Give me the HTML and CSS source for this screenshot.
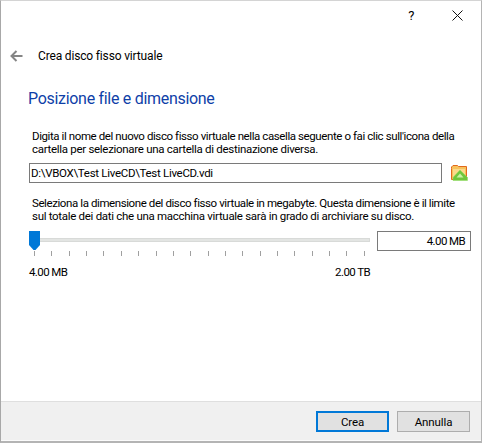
FILE: index.html
```html
<!DOCTYPE html>
<html lang="it">
<head>
    <meta charset="UTF-8">
    <meta name="viewport" content="width=device-width, initial-scale=1.0">
    <title>Crea disco fisso virtuale</title>
    <link rel="stylesheet" href="styles.css">
</head>
<body>
    <div class="window">
        <div class="title-buttons">
            <span class="help-button">?</span>
            <svg class="close-button" width="11" height="11" viewBox="0 0 11 11">
                <path d="M0.5 0.5L10.5 10.5M10.5 0.5L0.5 10.5" stroke="#111" stroke-width="1" fill="none"/>
            </svg>
        </div>

        <div class="wizard-header">
            <svg class="back-arrow" width="13" height="12" viewBox="0 0 13 12">
                <path d="M12.5 6H2M6.5 1L1.5 6L6.5 11" stroke="#858585" stroke-width="2" fill="none"/>
            </svg>
            <span class="wizard-title">Crea disco fisso virtuale</span>
        </div>

        <div class="content">
            <h1 class="page-title">Posizione file e dimensione</h1>

            <p class="description"><span class="long-line">Digita il nome del nuovo disco fisso virtuale nella casella seguente o fai clic sull'icona della</span><br>cartella per selezionare una cartella di destinazione diversa.</p>

            <div class="file-row">
                <div class="file-input">D:\VBOX\Test LiveCD\Test LiveCD.vdi</div>
                <svg class="folder-icon" width="17" height="18" viewBox="0 0 17 18">
                    <path d="M0.5 4.5V15.5H15.5V2.5H7.5L6.5 1.5H2L0.5 3Z" fill="#f7c25c" stroke="#e2691c"/>
                    <rect x="2" y="5" width="12" height="9" fill="#fbd98a"/>
                    <path d="M9 6L16.5 13.5V16.5H2V13.5Z" fill="#6fc63c" stroke="#8fdc5c" stroke-width="0.5"/>
                    <path d="M9 9.5L12.5 13.5H5.5Z" fill="#c9f2a5"/>
                </svg>
            </div>

            <p class="description size-text"><span class="long-line">Seleziona la dimensione del disco fisso virtuale in megabyte. Questa dimensione è il limite</span><br>sul totale dei dati che una macchina virtuale sarà in grado di archiviare su disco.</p>

            <div class="size-row">
                <div class="slider">
                    <div class="slider-track"></div>
                    <svg class="slider-thumb" width="11" height="19" viewBox="0 0 11 19">
                        <path d="M0 0H11V14L6.5 19H4.5L0 14Z" fill="#0078d7"/>
                    </svg>
                    <div class="slider-ticks">
                        <i></i><i></i><i></i><i></i><i></i><i></i><i></i><i></i><i></i><i></i>
                        <i></i><i></i><i></i><i></i><i></i><i></i><i></i><i></i><i></i><i></i>
                    </div>
                    <div class="slider-labels">
                        <span>4.00 MB</span>
                        <span>2.00 TB</span>
                    </div>
                </div>
                <div class="size-input">4.00 MB</div>
            </div>
        </div>

        <div class="footer">
            <button class="dialog-button default-button" type="button">Crea</button>
            <button class="dialog-button" type="button">Annulla</button>
        </div>
    </div>
</body>
</html>
```

FILE: styles.css
```css
html,
body {
    margin: 0;
    padding: 0;
    height: 443px;
    overflow: hidden;
}

body {
    font-family: Roboto, "Liberation Sans", sans-serif;
    font-size: 11.5px;
    letter-spacing: -0.3px;
    color: #000;
    background-color: #fff;
}

.window {
    height: 443px;
    box-sizing: border-box;
    display: flex;
    flex-direction: column;
    background-color: #fff;
    border-top: 1px solid #d4d4d4;
    border-left: 1px solid #a8a8a8;
    border-right: 1px solid #b4b4b4;
    border-bottom: 2px solid #b4b4b4;
}

.title-buttons {
    height: 29px;
    display: flex;
    justify-content: flex-end;
    align-items: center;
}

.help-button {
    font-size: 13px;
    margin-right: 38px;
}

.close-button {
    margin-right: 18px;
}

.wizard-header {
    height: 52px;
    display: flex;
    align-items: center;
    padding-left: 9px;
}

.wizard-title {
    margin-left: 15px;
    font-size: 12px;
    letter-spacing: -0.16px;
}

.content {
    flex: 1;
    padding: 6px 10px 0 27px;
}

.page-title {
    margin: 0;
    font-size: 16px;
    font-weight: normal;
    line-height: 22px;
    letter-spacing: -0.3px;
    color: #0f3fa8;
}

.description {
    margin: 20px 0 0 4px;
    line-height: 13px;
    white-space: nowrap;
}

.long-line {
    letter-spacing: -0.41px;
}

.file-row {
    margin-top: 7px;
    margin-left: 1px;
    display: flex;
    align-items: center;
}

.file-input {
    width: 413px;
    height: 20px;
    box-sizing: border-box;
    border: 1px solid #7a7a7a;
    padding-left: 1px;
    line-height: 18px;
}

.folder-icon {
    margin-left: 9px;
}

.size-text {
    margin-top: 14px;
}

.size-row {
    margin-top: 8px;
    margin-left: 1px;
    display: flex;
    justify-content: space-between;
    align-items: flex-start;
}

.slider {
    width: 341px;
    position: relative;
}

.slider-track {
    margin: 7px 0 0 0;
    height: 4px;
    background-color: #e3e5e3;
    border: 1px solid #d8dad8;
    box-sizing: border-box;
}

.slider-thumb {
    position: absolute;
    top: 0;
    left: 0;
}

.slider-ticks {
    margin: 9px 5px 0 5px;
    height: 5px;
    display: flex;
    justify-content: space-between;
}

.slider-ticks i {
    width: 1px;
    background-color: #a0a0a0;
}

.slider-labels {
    margin-top: 9px;
    display: flex;
    justify-content: space-between;
    letter-spacing: -0.6px;
}

.size-input {
    width: 94px;
    height: 20px;
    box-sizing: border-box;
    border: 1px solid #7a7a7a;
    padding-right: 5px;
    text-align: right;
    line-height: 18px;
    letter-spacing: -0.6px;
}

.footer {
    height: 40px;
    box-sizing: border-box;
    display: flex;
    justify-content: flex-end;
    gap: 8px;
    padding: 9px 11px 0 0;
    background-color: #f0f0f0;
    border-top: 1px solid #dfdfdf;
    border-bottom: 1px solid #fbfbfb;
}

.dialog-button {
    width: 73px;
    height: 21px;
    box-sizing: border-box;
    padding: 0;
    font-family: inherit;
    font-size: 11.5px;
    letter-spacing: -0.1px;
    color: #000;
    background-color: #e1e1e1;
    border: 1px solid #adadad;
}

.default-button {
    border: 2px solid #0078d7;
}
```
